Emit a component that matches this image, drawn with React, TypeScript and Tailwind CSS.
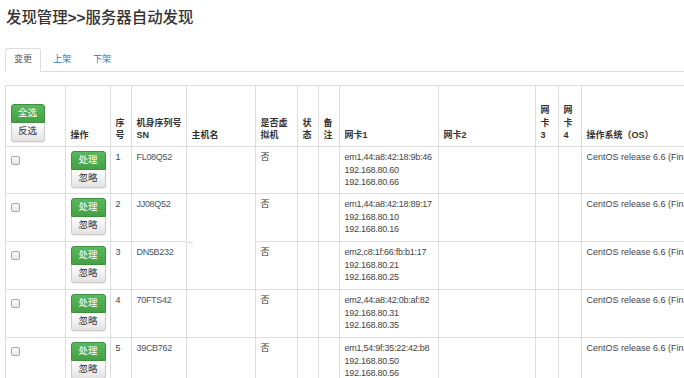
import React from "react";

const rows = [
  { n: 1, sn: "FL08Q52", mac: "em1,44:a8:42:18:9b:46", ips: ["192.168.80.60", "192.168.80.66"], h: "h-[47px]" },
  { n: 2, sn: "JJ08Q52", mac: "em1,44:a8:42:18:89:17", ips: ["192.168.80.10", "192.168.80.16"], h: "h-[48px]" },
  { n: 3, sn: "DN5B232", mac: "em2,c8:1f:66:fb:b1:17", ips: ["192.168.80.21", "192.168.80.25"], h: "h-[48px]" },
  { n: 4, sn: "70FTS42", mac: "em2,44:a8:42:0b:af:82", ips: ["192.168.80.31", "192.168.80.35"], h: "h-[48px]" },
  { n: 5, sn: "39CB762", mac: "em1,54:9f:35:22:42:b8", ips: ["192.168.80.50", "192.168.80.56"], h: "h-[48px]" },
];

const th =
  "border-l border-t border-[#ddd] align-bottom text-left font-bold px-[4.5px] pb-[4.5px] pt-[4px] leading-[12.5px] whitespace-nowrap";
const td =
  "border-l border-t border-[#ddd] align-top px-[4.5px] pt-[4px] pb-[4px] leading-[12.5px] whitespace-nowrap";

function GreenBtn({ label, w, h }: { label: string; w: string; h: string }) {
  return (
    <div
      className={`${w} ${h} flex items-center justify-center rounded-t-[3px] border border-[#3e8f3e] bg-[linear-gradient(to_bottom,#5cb85c,#45a045)] text-white text-[9.5px] font-normal`}
    >
      {label}
    </div>
  );
}

function WhiteBtn({ label, w, h }: { label: string; w: string; h: string }) {
  return (
    <div
      className={`${w} ${h} flex items-center justify-center rounded-b-[3px] border border-t-0 border-[#ccc] bg-[linear-gradient(to_bottom,#ffffff,#e3e3e3)] text-[#333] text-[9.5px] font-normal shadow-[0_1px_1px_rgba(0,0,0,0.08)]`}
    >
      {label}
    </div>
  );
}

export default function App() {
  return (
    <div
      className="w-[684px] h-[378px] overflow-hidden bg-white text-[#333] pl-[5px]"
      style={{ fontFamily: '"Liberation Sans", Arial, "Noto Sans CJK SC", sans-serif' }}
    >
      <div className="mt-[8.5px] h-[17px] leading-[17px] text-[15.4px] font-medium text-[#333] pl-[1px] whitespace-nowrap">
        发现管理<span className="font-bold">&gt;&gt;</span>服务器自动发现
      </div>

      <div className="mt-[22.5px] flex border-b border-[#ddd] text-[9px] w-[800px]">
        <div className="mb-[-1px] h-[24px] flex items-center px-[8px] border border-[#ddd] border-b-transparent rounded-t-[3px] bg-white text-[#555] mr-[2px]">
          变更
        </div>
        <div className="mb-[-1px] h-[24px] flex items-center px-[9px] border border-transparent text-[#2a7bc0] mr-[2px]">
          上架
        </div>
        <div className="mb-[-1px] h-[24px] flex items-center px-[9px] border border-transparent text-[#2a7bc0]">
          下架
        </div>
      </div>

      <table className="mt-[13px] table-fixed border-separate border-spacing-0 w-[776px] text-[9px]">
        <colgroup>
          <col className="w-[60px]" />
          <col className="w-[45px]" />
          <col className="w-[21px]" />
          <col className="w-[55px]" />
          <col className="w-[69px]" />
          <col className="w-[42px]" />
          <col className="w-[21px]" />
          <col className="w-[21px]" />
          <col className="w-[99px]" />
          <col className="w-[97px]" />
          <col className="w-[23px]" />
          <col className="w-[23px]" />
          <col className="w-[200px]" />
        </colgroup>
        <thead>
          <tr>
            <th className={`${th} h-[61px]`}>
              <div className="flex flex-col">
                <GreenBtn label="全选" w="w-[34px]" h="h-[19px]" />
                <WhiteBtn label="反选" w="w-[34px]" h="h-[19px]" />
              </div>
            </th>
            <th className={th}>操作</th>
            <th className={th}>
              序<br />号
            </th>
            <th className={th}>
              机身序列号<br />SN
            </th>
            <th className={th}>主机名</th>
            <th className={th}>
              是否虚<br />拟机
            </th>
            <th className={th}>
              状<br />态
            </th>
            <th className={th}>
              备<br />注
            </th>
            <th className={th}>网卡1</th>
            <th className={th}>网卡2</th>
            <th className={th}>
              网<br />卡<br />3
            </th>
            <th className={th}>
              网<br />卡<br />4
            </th>
            <th className={th}>操作系统（OS）</th>
          </tr>
        </thead>
        <tbody>
          {rows.map((r) => (
            <tr key={r.n}>
              <td className={`${td} ${r.h}`}>
                <div className="mt-[5px] w-[9px] h-[9px] rounded-[2px] border border-[#a9a9a9] bg-[linear-gradient(to_bottom,#fafafa,#e6e6e6)]" />
              </td>
              <td className={td}>
                <div className="flex flex-col">
                  <GreenBtn label="处理" w="w-[35px]" h="h-[18.5px]" />
                  <WhiteBtn label="忽略" w="w-[35px]" h="h-[18.5px]" />
                </div>
              </td>
              <td className={`${td} text-[#444]`}>{r.n}</td>
              <td className={`${td} text-[#4a5563] tracking-[-0.3px]`}>{r.sn}</td>
              <td
                className={
                  r.n === 3
                    ? "border-l border-t border-l-[#ddd] border-t-transparent align-top bg-[linear-gradient(to_right,#ddd_6px,transparent_6px)] bg-no-repeat bg-top bg-[length:100%_1px]"
                    : td
                }
              ></td>
              <td className={`${td} text-[#333]`}>否</td>
              <td className={td}></td>
              <td className={td}></td>
              <td className={`${td} text-[#444] tracking-[-0.25px]`}>
                <div>{r.mac}</div>
                <div>{r.ips[0]}</div>
                <div>{r.ips[1]}</div>
              </td>
              <td className={td}></td>
              <td className={td}></td>
              <td className={td}></td>
              <td className={`${td} text-[#444]`}>CentOS release 6.6 (Final)</td>
            </tr>
          ))}
        </tbody>
      </table>
    </div>
  );
}
